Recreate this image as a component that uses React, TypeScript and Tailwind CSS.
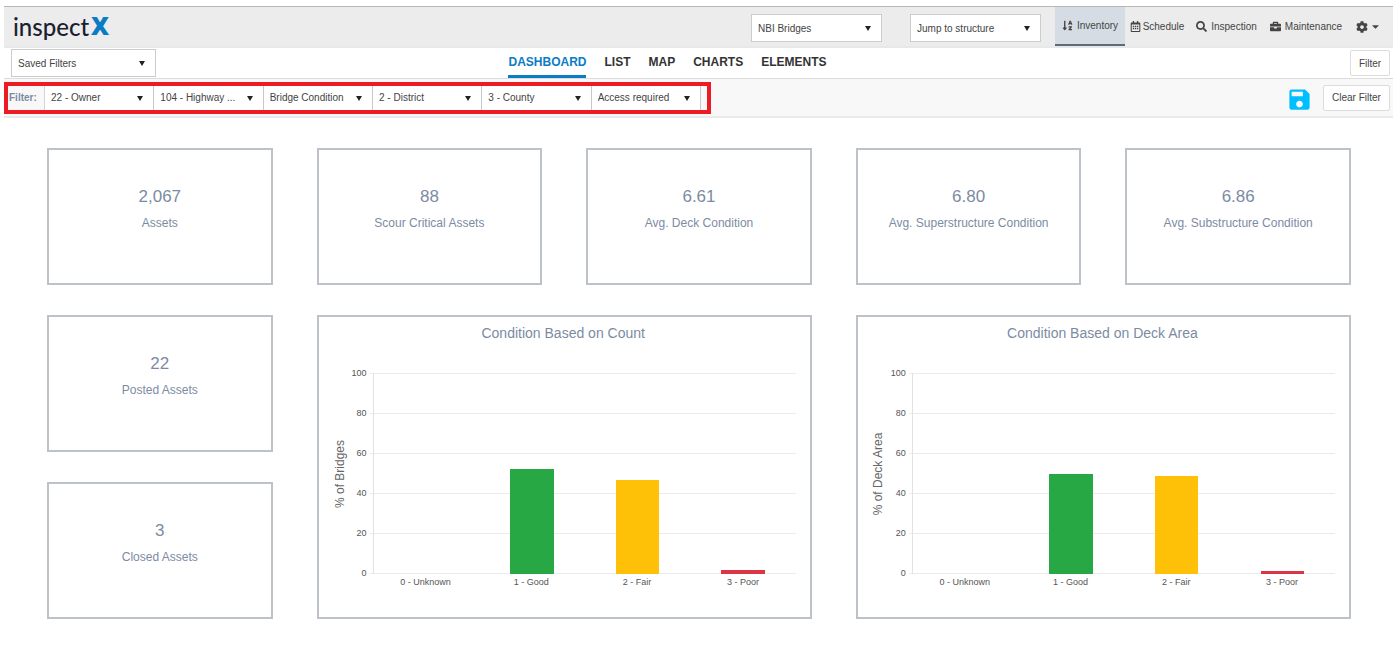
import React from "react";
import {
  FaSortAlphaDown,
  FaRegCalendarAlt,
  FaSearch,
  FaBriefcase,
  FaCog,
  FaCaretDown,
} from "react-icons/fa";
import { MdSave } from "react-icons/md";

const filters = [
  "22 - Owner",
  "104 - Highway ...",
  "Bridge Condition",
  "2 - District",
  "3 - County",
  "Access required",
];

const tabs = ["DASHBOARD", "LIST", "MAP", "CHARTS", "ELEMENTS"];

const topStats = [
  { value: "2,067", label: "Assets" },
  { value: "88", label: "Scour Critical Assets" },
  { value: "6.61", label: "Avg. Deck Condition" },
  { value: "6.80", label: "Avg. Superstructure Condition" },
  { value: "6.86", label: "Avg. Substructure Condition" },
];

const sideStats = [
  { value: "22", label: "Posted Assets" },
  { value: "3", label: "Closed Assets" },
];

const ticks = [100, 80, 60, 40, 20, 0];

type Bar = { label: string; value: number; color: string };

const countBars: Bar[] = [
  { label: "0 - Unknown", value: 0, color: "bg-transparent" },
  { label: "1 - Good", value: 52, color: "bg-[#28a745]" },
  { label: "2 - Fair", value: 47, color: "bg-[#ffc107]" },
  { label: "3 - Poor", value: 2, color: "bg-[#dc3545]" },
];

const areaBars: Bar[] = [
  { label: "0 - Unknown", value: 0, color: "bg-transparent" },
  { label: "1 - Good", value: 50, color: "bg-[#28a745]" },
  { label: "2 - Fair", value: 49, color: "bg-[#ffc107]" },
  { label: "3 - Poor", value: 1.5, color: "bg-[#dc3545]" },
];

function Dropdown({ label, className }: { label: string; className: string }) {
  return (
    <div className={`relative bg-white ${className}`}>
      <select
        aria-label={label}
        className="block w-full h-full appearance-none bg-transparent pl-[6px] pr-5 text-[10px] text-[#444] outline-none"
      >
        <option>{label}</option>
      </select>
      {/* flecha */}
      <svg
        viewBox="0 0 6 5"
        className="absolute top-1/2 right-[10px] -mt-[2px] w-[6px] h-[5px] pointer-events-none"
      >
        <path d="M0 0h6L3 5z" fill="#222" />
      </svg>
    </div>
  );
}

function StatCard({ value, label }: { value: string; label: string }) {
  return (
    <div className="h-[137px] border-2 border-[#bcc2c7] bg-white flex flex-col items-center pt-[35px] text-[#7c8ba3]">
      <p className="text-[17px] leading-6">{value}</p>
      <p className="text-[12px] leading-4 mt-[6px]">{label}</p>
    </div>
  );
}

function ChartCard({ title, axis, bars }: { title: string; axis: string; bars: Bar[] }) {
  return (
    <div className="col-span-2 row-span-2 border-2 border-[#bcc2c7] bg-white flex flex-col pl-3 pr-[14px]">
      <h2 className="text-[14px] leading-5 text-center text-[#7c8ba3] mt-[6px]">{title}</h2>

      <div className="flex mt-[30px] h-[201px]">
        <div className="w-[18px] flex items-center justify-center">
          <p className="text-[12px] leading-4 text-[#666] whitespace-nowrap -rotate-90">{axis}</p>
        </div>

        {/* eje Y */}
        <div className="w-[18px] flex flex-col justify-between -my-[5px] text-right text-[9px] leading-[11px] text-[#555]">
          {ticks.map((t) => (
            <span key={t}>{t}</span>
          ))}
        </div>

        {/* area del grafico */}
        <div className="relative flex-1 ml-[3px]">
          <div className="absolute inset-0 flex flex-col justify-between">
            {ticks.map((t) => (
              <div key={t} className="h-px bg-[#ebebeb]" />
            ))}
          </div>
          <div className="relative h-full ml-[3px] border-l border-[#e2e2e2] flex">
            {bars.map((b) => (
              <div key={b.label} className="flex-1 flex items-end justify-center">
                <div className={`w-[41%] ${b.color}`} style={{ height: `${b.value}%` }} />
              </div>
            ))}
          </div>
        </div>
      </div>

      <div className="flex pl-[42px] mt-[2px] text-[9px] leading-3 text-[#555]">
        {bars.map((b) => (
          <span key={b.label} className="flex-1 text-center">
            {b.label}
          </span>
        ))}
      </div>
    </div>
  );
}

export default function App() {
  return (
    <div className="min-h-screen bg-white pt-[6px] font-['Liberation_Sans',Arial,sans-serif] text-[#444]">
      <div className="pl-1 pr-[5px]">
        {/* HEADER */}
        <header className="h-[42px] flex items-stretch bg-[#ececec] border-t border-[#b5b8b5] border-b-2 border-b-[#e6e8ea]">
          <a href="#" className="flex items-center gap-[2px] pl-[9px] text-[#1b2130]">
            <span className="font-['Lato',sans-serif] font-medium text-[24px] leading-6">inspect</span>
            <span className="font-['Open_Sans',sans-serif] font-extrabold text-[25px] leading-6 pb-1 text-[#0a7cc4]">X</span>
          </a>

          <Dropdown label="NBI Bridges" className="ml-auto mt-[7px] w-[131px] h-7 border border-[#ccc]" />
          <Dropdown label="Jump to structure" className="ml-7 mt-[7px] w-[131px] h-7 border border-[#ccc]" />

          <nav className="flex ml-[14px] text-[10px] text-[#444]">
            <a href="#" className="w-[70px] flex items-center justify-center gap-1 bg-[#d6dce4] border-b-2 border-[#5b6b7b]">
              <FaSortAlphaDown size={11} /> Inventory
            </a>
            <a href="#" className="w-[64px] flex items-center justify-center gap-[2px]">
              <FaRegCalendarAlt size={11} /> Schedule
            </a>
            <a href="#" className="w-[75px] flex items-center justify-center gap-1">
              <FaSearch size={11} /> Inspection
            </a>
            <a href="#" className="w-[84px] flex items-center justify-center gap-1">
              <FaBriefcase size={11} /> Maintenance
            </a>
            <button aria-label="Settings" className="w-[45px] pr-1 flex items-center justify-center gap-[2px]">
              <FaCog size={12} /> <FaCaretDown size={11} />
            </button>
          </nav>
        </header>

        {/* TABS */}
        <div className="h-[31px] grid grid-cols-[1fr_auto_1fr] border-b border-[#dcdcdc]">
          <Dropdown label="Saved Filters" className="ml-[7px] mt-px w-[145px] h-7 border border-[#ccc]" />

          <nav className="flex gap-[18px] pr-[62px] text-[12px] font-bold text-[#333]">
            {tabs.map((t, i) => (
              <a
                key={t}
                href="#"
                className={`flex items-center border-b-3 ${i === 0 ? "text-[#0a7cc4] border-[#0a7cc4]" : "border-transparent"}`}
              >
                {t}
              </a>
            ))}
          </nav>

          <button className="justify-self-end mt-[2px] mr-[3px] w-10 h-[26px] border border-[#dcdcdc] rounded-xs text-[10px]">
            Filter
          </button>
        </div>

        {/* FILTROS */}
        <div className="h-[39px] flex items-center bg-[#f8f8f8] border-b-2 border-[#e9eaeb]">
          <div className="w-[707px] h-8 flex border-4 border-[#ed1c24] pr-[6px]">
            <span className="w-9 pl-px flex items-center text-[10px] font-bold text-[#7c8ba3]">Filter:</span>
            <div className="flex flex-1 border-l border-[#d5d5d5]">
              {filters.map((f) => (
                <Dropdown key={f} label={f} className="flex-1 border-r border-[#c8c8c8]" />
              ))}
            </div>
          </div>

          <button aria-label="Save filter" className="ml-auto pt-1 text-[#00bfff]">
            <MdSave size={27} />
          </button>
          <button className="ml-[10px] mr-[3px] w-[67px] h-[26px] bg-white border border-[#dcdcdc] rounded-xs text-[10px]">
            Clear Filter
          </button>
        </div>
      </div>

      {/* DASHBOARD */}
      <main className="grid grid-cols-5 gap-x-11 gap-y-[30px] px-[47px] pt-[30px]">
        {topStats.map((s) => (
          <StatCard key={s.label} value={s.value} label={s.label} />
        ))}

        <StatCard value={sideStats[0].value} label={sideStats[0].label} />
        <ChartCard title="Condition Based on Count" axis="% of Bridges" bars={countBars} />
        <ChartCard title="Condition Based on Deck Area" axis="% of Deck Area" bars={areaBars} />
        <StatCard value={sideStats[1].value} label={sideStats[1].label} />
      </main>
    </div>
  );
}
